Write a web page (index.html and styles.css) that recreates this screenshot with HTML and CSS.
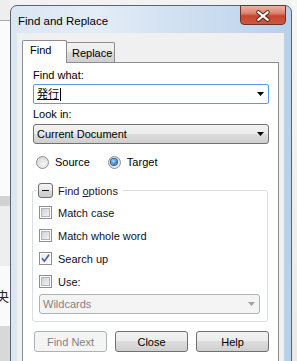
FILE: index.html
```html
<!DOCTYPE html>
<html lang="en">
    <head>
        <meta charset="UTF-8">
        <meta name="viewport" content="width=device-width, initial-scale=1.0">
        <title>Find and Replace</title>
        <link rel="stylesheet" href="styles.css">
    </head>

    <body>
        <div class="desktop">
            <div class="side side-left"><span class="bg-char">央</span></div>

            <div class="window">
                <div class="titlebar">
                    <span class="title">Find and Replace</span>
                    <button class="close-btn" aria-label="Close">
                        <svg width="46" height="20" viewBox="0 0 46 20">
                            <path d="M18 6 L28 14 M28 6 L18 14" stroke="#5e2016" stroke-width="4.2" stroke-linecap="round"/>
                            <path d="M18 6 L28 14 M28 6 L18 14" stroke="#fff" stroke-width="2.2" stroke-linecap="round"/>
                        </svg>
                    </button>
                </div>

                <div class="client">
                    <div class="tabs">
                        <div class="tab tab-active">Find</div>
                        <div class="tab tab-normal">Replace</div>
                    </div>

                    <div class="panel">
                        <div class="label">Find what:</div>
                        <div class="combo combo-edit">
                            <span class="edit-text"><span class="ime">発行</span><span class="caret"></span></span>
                            <svg class="arrow" width="7" height="4" viewBox="0 0 7 4"><path d="M0 0H7L3.5 4Z" fill="#000"/></svg>
                        </div>

                        <div class="label label-gap">Look in:</div>
                        <div class="combo combo-drop">
                            <span>Current Document</span>
                            <svg class="arrow" width="7" height="4" viewBox="0 0 7 4"><path d="M0 0H7L3.5 4Z" fill="#000"/></svg>
                        </div>

                        <div class="radios">
                            <label class="radio-item"><span class="radio"></span>Source</label>
                            <label class="radio-item radio-second"><span class="radio radio-on"></span>Target</label>
                        </div>

                        <fieldset class="group">
                            <legend class="group-legend">
                                <span class="group-title"><span class="toggle"></span><span>Find <u>o</u>ptions</span></span>
                            </legend>

                            <div class="check-row check-first">
                                <span class="check"><span class="check-fill"></span></span>Match case
                            </div>
                            <div class="check-row">
                                <span class="check"><span class="check-fill"></span></span>Match whole word
                            </div>
                            <div class="check-row">
                                <span class="check"><span class="check-fill check-on">
                                    <svg width="9" height="9" viewBox="0 0 9 9"><path d="M1 4.2 L3.4 7.2 L8 0.8" fill="none" stroke="#4a5d9a" stroke-width="1.6"/></svg>
                                </span></span>Search up
                            </div>
                            <div class="check-row">
                                <span class="check"><span class="check-fill"></span></span>Use:
                            </div>

                            <div class="combo combo-disabled">
                                <span>Wildcards</span>
                                <svg class="arrow" width="7" height="4" viewBox="0 0 7 4"><path d="M0 0H7L3.5 4Z" fill="#a3a3a3"/></svg>
                            </div>
                        </fieldset>

                        <div class="buttons">
                            <button class="btn btn-disabled">Find Next</button>
                            <button class="btn">Close</button>
                            <button class="btn">Help</button>
                        </div>
                    </div>
                </div>
            </div>

            <div class="side side-right"></div>
        </div>
    </body>
</html>
```

FILE: styles.css
```css
* {
    box-sizing: border-box;
    margin: 0;
    padding: 0;
    font-family: "Liberation Sans", Arial, "Noto Sans CJK JP", sans-serif;
}
body {
    width: 297px;
    height: 361px;
    overflow: hidden;
    background-color: #f2f2f2;
    font-size: 11px;
    color: #000;
}
.desktop {
    display: flex;
    height: 361px;
}
.side {
    flex-shrink: 0;
    overflow: hidden;
}
.side-left {
    width: 10px;
    background: linear-gradient(#eeeeee 0, #eeeeee 20px, #a9a9a9 20px, #a9a9a9 21px, #fbfbfb 21px, #fbfbfb 196px, #d2d2d2 196px, #d2d2d2 206px, #eeeeee 206px, #eeeeee 266px, #fafafa 266px, #fafafa 326px, #d8d8d8 326px);
}
.bg-char {
    display: block;
    margin: 289px 0 0 -4px;
    font-size: 13px;
    line-height: 16px;
    color: #222;
}
.side-right {
    width: 5px;
    background: linear-gradient(#f6f6f6, #e9e9e9);
}

/* window frame */
.window {
    width: 282px;
    height: 366px;
    flex-shrink: 0;
    margin-top: 5px;
    display: flex;
    flex-direction: column;
    border: 1px solid #5f656e;
    border-radius: 7px 7px 0 0;
    background: linear-gradient(to right, #dae6f3 0%, #e4edf7 30%, #d3e2f2 55%, #c6d9ee 80%, #b9d0e9 100%);
}
.titlebar {
    height: 27px;
    flex-shrink: 0;
    display: flex;
    justify-content: space-between;
    align-items: flex-start;
    padding: 0 5px 0 7px;
}
.title {
    font-size: 11.5px;
    line-height: 14px;
    padding-top: 8px;
}
.close-btn {
    width: 46px;
    height: 20px;
    margin-top: -1px;
    display: flex;
    border: 1px solid #6e3328;
    border-radius: 0 0 4px 4px;
    background: linear-gradient(#eab2a4 0%, #dc8471 40%, #c8452f 55%, #cb5a41 100%);
    cursor: pointer;
}
.client {
    flex: 1;
    display: flex;
    flex-direction: column;
    margin: 0 7px 0 6px;
    padding: 7px 5px 0;
    background-color: #f0f0f0;
}

/* tabs */
.tabs {
    display: flex;
    align-items: flex-end;
    height: 22px;
}
.tab {
    border: 1px solid #898c95;
    border-bottom: none;
    line-height: 13px;
}
.tab-active {
    position: relative;
    z-index: 1;
    width: 45px;
    height: 23px;
    margin-bottom: -1px;
    padding: 3px 0 0 7px;
    background-color: #fff;
    border-radius: 2px 2px 0 0;
}
.tab-normal {
    width: 49px;
    height: 20px;
    margin-left: -1px;
    padding: 4px 0 0 5px;
    background: linear-gradient(#f3f3f3, #ebebeb 50%, #dddddd 50%, #cfcfcf);
    border-radius: 2px 2px 0 0;
}
.panel {
    flex: 1;
    border: 1px solid #898c95;
    background-color: #fff;
    padding: 6px 9px 0 10px;
}
.label {
    line-height: 13px;
}
.label-gap {
    margin-top: 4px;
}

/* combo boxes */
.combo {
    height: 20px;
    margin-top: 2px;
    display: flex;
    align-items: center;
    justify-content: space-between;
    padding: 0 4px 0 3px;
    line-height: 13px;
}
.combo-edit {
    border: 1px solid #569de5;
    border-radius: 2px;
    background-color: #fff;
}
.combo-drop {
    margin-top: 3px;
    border: 1px solid #707070;
    border-radius: 3px;
    background: linear-gradient(#f2f2f2, #ebebeb 50%, #dddddd 50%, #cfcfcf);
}
.combo-disabled {
    margin-top: 6px;
    border: 1px solid #adb2b5;
    border-radius: 3px;
    background-color: #f4f4f4;
    color: #838383;
}
.edit-text {
    display: flex;
    align-items: center;
}
.ime {
    font-size: 11px;
    text-decoration: underline;
}
.caret {
    width: 1px;
    height: 13px;
    margin-left: 1px;
    background-color: #000;
}
.arrow {
    display: block;
}

/* radios */
.radios {
    display: flex;
    align-items: center;
    height: 14px;
    margin-top: 11px;
    padding-left: 3px;
}
.radio-item {
    display: flex;
    align-items: center;
    gap: 6px;
}
.radio-second {
    margin-left: 18px;
}
.radio {
    width: 13px;
    height: 13px;
    display: flex;
    align-items: center;
    justify-content: center;
    border: 1px solid #8e8f8f;
    border-radius: 50%;
    background: radial-gradient(circle at 60% 65%, #f8f8f8, #d9d9d9 70%, #cfcfcf);
}
.radio-on::after {
    content: "";
    width: 6px;
    height: 6px;
    border-radius: 50%;
    background: radial-gradient(circle at 40% 35%, #b4e3ff, #3a8fd6 55%, #1a4f86);
    box-shadow: 0 0 0 1px #3b5a7c;
}

/* options group */
.group {
    margin: 14px 1px 0 -1px;
    padding: 0 7px 7px 6px;
    border: 1px solid #d5dfe5;
    border-radius: 3px;
}
.group-legend {
    margin-left: -2px;
    padding: 0 5px 0 1px;
}
.group-title {
    display: flex;
    align-items: center;
    gap: 5px;
    height: 15px;
    color: #2c1238;
}
.toggle {
    width: 15px;
    height: 15px;
    display: flex;
    align-items: center;
    justify-content: center;
    border: 1px solid #707070;
    border-radius: 3px;
    background: linear-gradient(#f4f4f4, #e6e6e6 50%, #d7d7d7 50%, #cdcdcd);
}
.toggle::after {
    content: "";
    width: 7px;
    height: 1px;
    background-color: #111;
}
.check-row {
    display: flex;
    align-items: center;
    gap: 6px;
    height: 13px;
    margin-top: 10px;
    color: #10102a;
}
.check-first {
    margin-top: 8px;
}
.check {
    width: 13px;
    height: 13px;
    padding: 1px;
    border: 1px solid #8e8f8f;
    background-color: #fff;
}
.check-fill {
    display: block;
    width: 9px;
    height: 9px;
    border: 1px solid #b3b6bb;
    background: linear-gradient(135deg, #cfd2d6, #f2f2f2);
}
.check-on {
    border: none;
    background: linear-gradient(135deg, #e9ebef, #fafafa);
}
.check-on svg {
    display: block;
}

/* buttons */
.buttons {
    display: flex;
    gap: 8px;
    margin-top: 9px;
    padding-left: 1px;
}
.btn {
    width: 73px;
    height: 21px;
    border: 1px solid #707070;
    border-radius: 3px;
    background: linear-gradient(#f2f2f2, #ebebeb 50%, #dddddd 50%, #cfcfcf);
    font-size: 11px;
    color: #000;
    cursor: pointer;
}
.btn-disabled {
    border-color: #adb2b5;
    background: #f4f4f4;
    color: #838383;
}
```
